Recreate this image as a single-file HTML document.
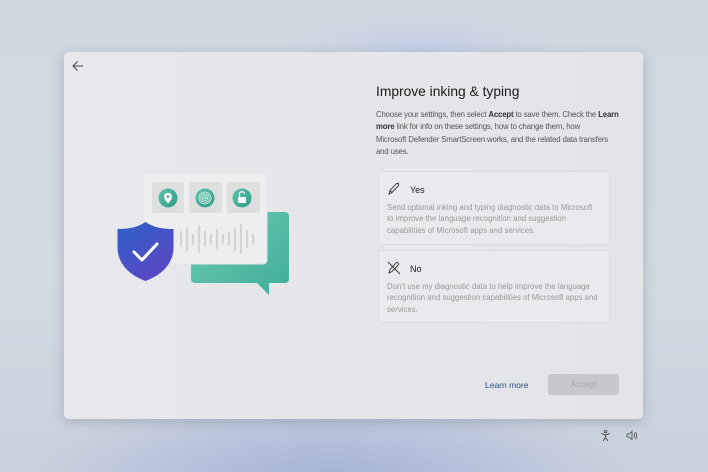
<!DOCTYPE html>
<html><head><meta charset="utf-8"><style>
*{margin:0;padding:0;box-sizing:border-box}
body{width:708px;height:472px;overflow:hidden;font-family:"Liberation Sans",sans-serif;position:relative;
background:radial-gradient(ellipse 300px 90px at 330px 480px,#a3b3d6 0%,rgba(163,179,214,0) 100%),radial-gradient(ellipse 140px 40px at 420px 55px,#c2cee6 0%,rgba(194,206,230,0) 100%),linear-gradient(#cfd7e1,#d2d9e2 60%,#c9d1de);}
.win{position:absolute;left:64px;top:52px;width:579px;height:367px;border-radius:5px;background:linear-gradient(90deg,#e6e8ec,#e4e6ea 60%,#e2e4e9);box-shadow:0 3px 12px rgba(60,70,100,.25)}
.abs{position:absolute}
h1{position:absolute;left:376px;top:84px;font-size:13.8px;font-weight:normal;color:#1a1a1a}
.desc{position:absolute;left:376px;top:109px;width:262px;font-size:7.8px;line-height:12.3px;color:#555;letter-spacing:-.15px}
.desc b{color:#333}
.opt{position:absolute;left:378px;width:232px;background:#e9eaed;border:1px solid #dcdde1;border-radius:3px}
.opt .t{position:absolute;left:31px;top:13px;font-size:9px;color:#222}
.opt .d{position:absolute;left:8px;font-size:7.8px;line-height:11.3px;color:#999;width:214px}
.lm{position:absolute;left:485px;top:380px;font-size:8.5px;color:#2d4f8a}
.acc{position:absolute;left:548px;top:374px;width:71px;height:21px;background:#c6c7ca;border-radius:3px;color:#a7a8ab;font-size:8.5px;text-align:center;line-height:21px}
</style></head><body>
<div class="win"></div>
<svg class="abs" style="left:70px;top:58px" width="16" height="16" viewBox="0 0 16 16"><path d="M13 8H3M7.5 3.5L3 8l4.5 4.5" stroke="#444" stroke-width="1" fill="none"/></svg>

<svg class="abs" style="left:100px;top:160px" width="210" height="150" viewBox="100 160 210 150">
<defs>
<linearGradient id="tg" x1="0" y1="0" x2="1" y2="1"><stop offset="0" stop-color="#6fcab5"/><stop offset="1" stop-color="#3fae98"/></linearGradient>
<linearGradient id="sg" x1="0" y1="0" x2="0.6" y2="1"><stop offset="0" stop-color="#2c62c9"/><stop offset="1" stop-color="#5a47c2"/></linearGradient>
<linearGradient id="cg" x1="0" y1="0" x2="1" y2="1"><stop offset="0" stop-color="#5ec4aa"/><stop offset="1" stop-color="#2f9c86"/></linearGradient>
</defs>
<path d="M195 212h90a4 4 0 0 1 4 4v63a4 4 0 0 1-4 4h-16v12l-12-12h-62a4 4 0 0 1-4-4v-63a4 4 0 0 1 4-4z" fill="url(#tg)"/>
<rect x="144" y="173" width="123" height="91" rx="4" fill="#eceef0" stroke="#e2e4e6"/>
<rect x="152" y="182" width="32" height="31" rx="2" fill="#dfdfe0"/>
<rect x="189" y="182" width="33" height="31" rx="2" fill="#dfdfe0"/>
<rect x="227" y="182" width="33" height="31" rx="2" fill="#dfdfe0"/>
<circle cx="168" cy="198" r="9.5" fill="url(#cg)"/>
<path d="M168 203.5c-2.5-3-4-4.8-4-6.8a4 4 0 0 1 8 0c0 2-1.5 3.8-4 6.8z" fill="#fff"/><circle cx="168" cy="196.6" r="1.4" fill="#4fb59c"/>
<circle cx="205" cy="198" r="9.5" fill="url(#cg)"/>
<g fill="none" stroke="#dff3ee" stroke-width=".8"><circle cx="205" cy="198" r="6"/><circle cx="205" cy="198" r="4.3"/><circle cx="205" cy="198" r="2.6"/><circle cx="205" cy="198" r="1"/></g>
<circle cx="242" cy="198" r="9.5" fill="url(#cg)"/>
<rect x="238" y="197" width="8" height="6" rx="1" fill="#fff"/><path d="M239.5 197v-2.5a2.5 2.5 0 0 1 5 -.5" stroke="#fff" stroke-width="1.2" fill="none"/>
<g stroke="#d3d4d6" stroke-width="2.2" stroke-linecap="round">
<line x1="181" y1="232" x2="181" y2="246"/><line x1="187" y1="228" x2="187" y2="250"/><line x1="193" y1="235" x2="193" y2="244"/><line x1="199" y1="226" x2="199" y2="252"/><line x1="205" y1="232" x2="205" y2="246"/><line x1="211" y1="234" x2="211" y2="244"/><line x1="217" y1="230" x2="217" y2="248"/><line x1="223" y1="235" x2="223" y2="243"/><line x1="229" y1="233" x2="229" y2="245"/><line x1="235" y1="229" x2="235" y2="250"/><line x1="241" y1="225" x2="241" y2="253"/><line x1="247" y1="231" x2="247" y2="247"/><line x1="253" y1="234" x2="253" y2="244"/>
</g>
<path d="M145.5 222c-9 6-18 7-28 7v18c0 17 12 28 28 34 16-6 28-17 28-34v-18c-10 0-19-1-28-7z" fill="url(#sg)"/>
<path d="M134 252l8 8 15-16" stroke="#fff" stroke-width="3" fill="none" stroke-linecap="round" stroke-linejoin="round"/>
</svg>

<h1>Improve inking &amp; typing</h1>
<div class="desc">Choose your settings, then select <b>Accept</b> to save them. Check the <b>Learn<br>more</b> link for info on these settings, how to change them, how<br>Microsoft Defender SmartScreen works, and the related data transfers<br>and uses.</div>

<div class="opt" style="top:171px;height:74px">
<svg class="abs" style="left:8px;top:10px" width="14" height="14" viewBox="0 0 14 14"><path d="M2 12l1-3.5 6-6.5a1.5 1.5 0 0 1 2.2 2.1l-6.2 6.4z M3 8.5l2.2 2.2 M9 2l3-1" stroke="#333" stroke-width=".9" fill="none"/></svg>
<div class="t">Yes</div>
<div class="d" style="top:30px">Send optional inking and typing diagnostic data to Microsoft to improve the language recognition and suggestion capabilities of Microsoft apps and services.</div>
</div>
<div class="opt" style="top:250px;height:73px">
<svg class="abs" style="left:8px;top:10px" width="14" height="14" viewBox="0 0 14 14"><path d="M2 12l1-3.5 6-6.5a1.5 1.5 0 0 1 2.2 2.1l-6.2 6.4z M1 1l12 12" stroke="#333" stroke-width=".9" fill="none"/></svg>
<div class="t">No</div>
<div class="d" style="top:30px">Don’t use my diagnostic data to help improve the language recognition and suggestion capabilities of Microsoft apps and services.</div>
</div>

<div class="lm">Learn more</div>
<div class="acc">Accept</div>

<svg class="abs" style="left:600px;top:430px" width="11" height="12" viewBox="0 0 11 12"><circle cx="5.5" cy="1.8" r="1.3" fill="none" stroke="#444" stroke-width=".8"/><path d="M1 3.5l4.5 1.5 4.5-1.5M5.5 5v2.5M3 11l2.5-3.5 2.5 3.5" stroke="#444" stroke-width=".9" fill="none"/></svg>
<svg class="abs" style="left:626px;top:430px" width="12" height="11" viewBox="0 0 12 11"><path d="M1 4h2l3-2.5v8L3 7H1z" fill="none" stroke="#444" stroke-width=".8"/><path d="M8 3.5q1.2 2 0 4M9.5 2q2.3 3.5 0 7" fill="none" stroke="#444" stroke-width=".8"/></svg>
</body></html>
